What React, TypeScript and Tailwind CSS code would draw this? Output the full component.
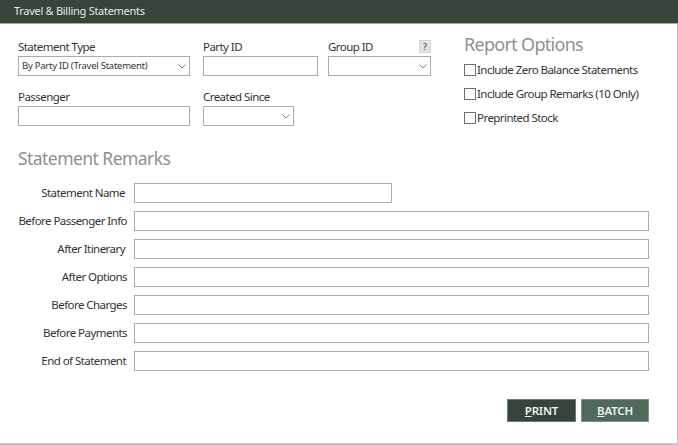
const font = "font-['Noto_Sans',sans-serif]";

const Chevron = () => (
  <svg width="8" height="5" viewBox="0 0 8 5" fill="none" stroke="#808080" strokeWidth="1" className="shrink-0 mt-[1px]">
    <path d="M0.5 0.5 L4 4 L7.5 0.5" />
  </svg>
);

const Input = ({ className = "" }: { className?: string }) => (
  <div className={`h-5 border border-[#ababab] bg-white ${className}`} />
);

const Select = ({ className = "", text = "" }: { className?: string; text?: string }) => (
  <div className={`h-5 border border-[#ababab] bg-white flex items-center justify-between pl-[3px] pr-[3px] ${className}`}>
    <span className="text-[9.5px] tracking-[-0.25px] text-[#333] leading-none whitespace-nowrap">{text}</span>
    <Chevron />
  </div>
);

const Label = ({ children }: { children: string }) => (
  <div className="text-[11.5px] tracking-[-0.55px] leading-[15px] pb-[2px] text-[#333] whitespace-nowrap">{children}</div>
);

const Check = ({ children }: { children: string }) => (
  <div className="flex items-center gap-[1px] h-3">
    <div className="w-3 h-3 border border-[#6e6e6e] bg-white shrink-0" />
    <span className="text-[11.5px] tracking-[-0.55px] text-[#333] whitespace-nowrap leading-none">{children}</span>
  </div>
);

const rows: { label: string; pr: string; short?: boolean }[] = [
  { label: "Statement Name", pr: "pr-[9px]", short: true },
  { label: "Before Passenger Info", pr: "pr-[7px]" },
  { label: "After Itinerary", pr: "pr-[9px]" },
  { label: "After Options", pr: "pr-[7px]" },
  { label: "Before Charges", pr: "pr-[7px]" },
  { label: "Before Payments", pr: "pr-[7px]" },
  { label: "End of Statement", pr: "pr-[8px]" },
];

export default function App() {
  return (
    <div className={`${font} w-[678px] h-[445px] bg-white flex flex-col overflow-hidden border-b-2 border-b-[#b9c6d6]`}>
      <div className="h-6 shrink-0 bg-[#35453a] border-b border-[#a5a8a6] pl-[14px] flex items-center text-[11px] tracking-[-0.28px] text-[#e4e8e5]">
        Travel &amp; Billing Statements
      </div>
      <div className="flex-1 flex flex-col pl-[18px] pr-[28px] border-r border-[#c4c8cc]">
        <div className="flex mt-[15px]">
          <div className="flex flex-col gap-[13px] w-[185px] shrink-0">
            <div>
              <Label>Statement Type</Label>
              <Select className="w-[172px]" text="By Party ID (Travel Statement)" />
            </div>
            <div>
              <Label>Passenger</Label>
              <Input className="w-[172px]" />
            </div>
          </div>
          <div className="flex flex-col gap-[13px] w-[125px] shrink-0">
            <div>
              <Label>Party ID</Label>
              <Input className="w-[115px]" />
            </div>
            <div>
              <Label>Created Since</Label>
              <Select className="w-[91px]" />
            </div>
          </div>
          <div className="w-[136px] shrink-0">
            <div className="w-[103px]">
              <div className="flex justify-between items-start">
                <Label>Group ID</Label>
                <div className="w-[12px] h-[13px] mt-[1px] bg-[#e2e2e2] border border-[#d6d6d6] flex items-center justify-center text-[9px] leading-none text-[#333]">?</div>
              </div>
              <Select className="w-[103px]" />
            </div>
          </div>
          <div className="-mt-[8px] shrink-0">
            <div className="text-[18px] tracking-[-0.7px] leading-[26px] text-[#8f8f8f] whitespace-nowrap">Report Options</div>
            <div className="flex flex-col gap-3 mt-[7px]">
              <Check>Include Zero Balance Statements</Check>
              <Check>Include Group Remarks (10 Only)</Check>
              <Check>Preprinted Stock</Check>
            </div>
          </div>
        </div>
        <div className="text-[17.5px] tracking-[-0.55px] leading-[24px] pb-[1px] text-[#8f8f8f] mt-5">Statement Remarks</div>
        <div className="flex flex-col gap-2 mt-3">
          {rows.map((r) => (
            <div key={r.label} className="flex items-center">
              <div className={`w-[116px] shrink-0 text-right text-[11.5px] tracking-[-0.55px] leading-[15px] pb-[2px] text-[#333] whitespace-nowrap ${r.pr}`}>{r.label}</div>
              {r.short ? <Input className="w-[258px]" /> : <Input className="flex-1" />}
            </div>
          ))}
        </div>
        <div className="flex justify-end gap-[5px] mt-7">
          <div className="w-[69px] h-[23px] bg-[#35453a] border border-[#6d7a72] flex items-center justify-center text-[11.5px] tracking-[-0.2px] font-semibold text-[#eef1ef]">
            <span className="underline">P</span>RINT
          </div>
          <div className="w-[68px] h-[23px] bg-[#4f6a5b] border border-[#7c9086] flex items-center justify-center text-[11.5px] tracking-[-0.2px] font-semibold text-[#eef1ef]">
            <span className="underline">B</span>ATCH
          </div>
        </div>
      </div>
    </div>
  );
}
